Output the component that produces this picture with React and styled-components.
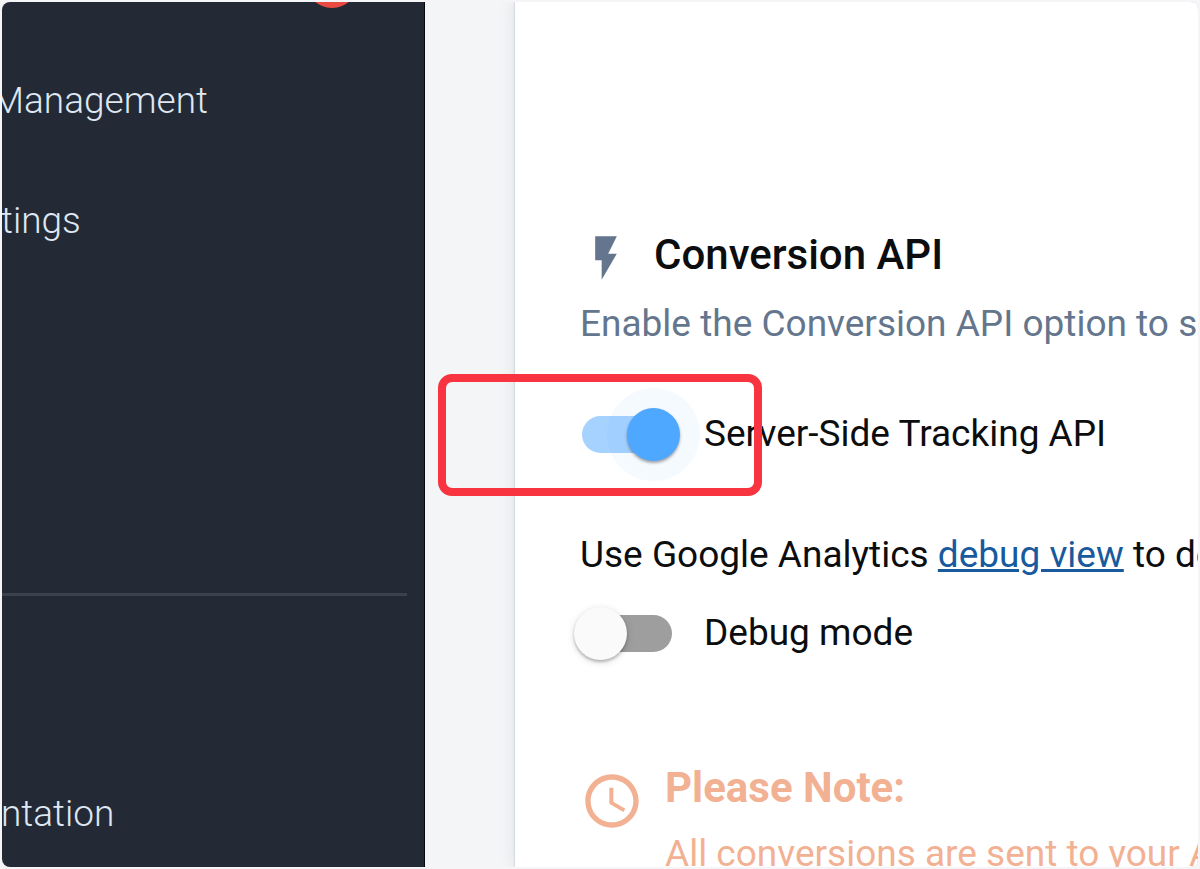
import React from "react";
import styled, { createGlobalStyle } from "styled-components";

const GlobalStyle = createGlobalStyle`
	* {
		box-sizing: border-box;
	}
	body {
		margin: 0;
		background-color: #f5f5f8;
		font-family: Roboto, "Liberation Sans", sans-serif;
		font-size: 37px;
		line-height: 56px;
		color: #0c0d0e;
	}
	h2, h3, p, ul {
		margin: 0;
		padding: 0;
	}
`;
const Page = styled.div`
	height: 100vh;
	padding: 2px;
`;
const Frame = styled.div`
	display: flex;
	height: 100%;
	border-radius: 8px;
	overflow: hidden;
	background-color: #f3f5f7;
`;
const Sidebar = styled.aside`
	position: relative;
	display: flex;
	flex-direction: column;
	flex: 0 0 423px;
	padding-top: 39px;
	overflow: hidden;
	background-color: #242a35;
	border-right: 1px solid #06080c;
`;
const Badge = styled.span`
	position: absolute;
	top: -46px;
	right: 66px;
	width: 52px;
	height: 52px;
	border-radius: 50%;
	background-color: #ea4a41;
`;
const NavList = styled.ul`
	list-style: none;
`;
const NavLink = styled.a`
	display: block;
	margin-left: ${({ $cut }) => ($cut ? "-10px" : "-1px")};
	line-height: 120px;
	font-weight: 300;
	color: #dfe7f2;
	text-decoration: none;
`;
const Divider = styled.hr`
	width: 405px;
	height: 3px;
	margin: 312px 0 158px;
	border: 0;
	flex-shrink: 0;
	background-color: #3b424d;
`;
const Main = styled.main`
	flex: 1;
	min-width: 0;
	margin-left: 90px;
	padding: 230px 0 0 65px;
	background-color: #fff;
	box-shadow: 0 0 2px rgba(40, 50, 60, 0.3), 0 0 16px rgba(40, 60, 70, 0.1);
	white-space: nowrap;
`;
const TitleRow = styled.div`
	display: flex;
	gap: 22px;
	height: 52px;
	margin-bottom: 12px;
`;
const Title = styled.h2`
	font-size: 42px;
	line-height: 46px;
	font-weight: 500;
`;
const Description = styled.p`
	color: #64768d;
`;
const Option = styled.div`
	position: relative;
	display: flex;
	align-items: center;
	gap: 32px;
	height: 100px;
	margin-top: ${({ $spaced }) => ($spaced ? "32px" : "0")};
	padding-left: 2px;
`;
const Switch = styled.input`
	appearance: none;
	position: relative;
	width: 90px;
	height: 37px;
	margin: 0;
	border-radius: 19px;
	background-color: #9e9e9e;
	cursor: pointer;

	&::before {
		content: "";
		position: absolute;
		top: -8px;
		left: -8px;
		width: 53px;
		height: 53px;
		border-radius: 50%;
		background-color: #fafafa;
		box-shadow: 0 2px 3px rgba(0, 0, 0, 0.25), 0 2px 8px rgba(0, 0, 0, 0.12);
	}
	&:checked {
		background-color: #a6d2ff;
	}
	&:checked::before {
		left: 45px;
		background-color: #4fa8ff;
		box-shadow: 0 2px 3px rgba(0, 0, 0, 0.35),
			0 0 0 20px rgba(79, 168, 255, 0.06);
	}
`;
const Highlight = styled.span`
	position: absolute;
	top: -10px;
	left: -142px;
	width: 324px;
	height: 122px;
	border: 8px solid #f73440;
	border-radius: 14px;
	pointer-events: none;
`;
const Hint = styled.p`
	margin-top: 43px;
`;
const DebugLink = styled.a`
	color: #185a9d;
	text-decoration: underline;
`;
const Note = styled.section`
	display: flex;
	gap: 21px;
	margin-top: 86px;
	color: #f2b193;
`;
const NoteTitle = styled.h3`
	margin-bottom: 19px;
	font-size: 42px;
	line-height: 38px;
	font-weight: 700;
`;
const Icon = styled.svg`
	flex-shrink: 0;
	width: ${({ $size }) => $size}px;
	height: ${({ $size }) => $size}px;
	fill: ${({ $color }) => $color || "currentColor"};
`;

const App = () => {
	return (
		<Page>
			<GlobalStyle />
			<Frame>
				<Sidebar>
					<Badge />
					<NavList>
						<li>
							<NavLink href="#management" $cut>Management</NavLink>
						</li>
						<li>
							<NavLink href="#settings">tings</NavLink>
						</li>
					</NavList>
					<Divider />
					<NavLink href="#documentation">ntation</NavLink>
				</Sidebar>
				<Main>
					<TitleRow>
						<Icon $size={52} $color="#64768d" viewBox="0 0 24 24">
							<path d="M7 2v11h3v9l7-12h-4l4-8z" />
						</Icon>
						<Title>Conversion API</Title>
					</TitleRow>
					<Description>
						Enable the Conversion API option to send
					</Description>
					<Option $spaced>
						<Switch type="checkbox" id="tracking" defaultChecked />
						<label htmlFor="tracking">Server-Side Tracking API</label>
						<Highlight />
					</Option>
					<Hint>
						Use Google Analytics{" "}
						<DebugLink href="#debug">debug view</DebugLink> to debug
					</Hint>
					<Option>
						<Switch type="checkbox" id="debug" />
						<label htmlFor="debug">Debug mode</label>
					</Option>
					<Note>
						<Icon $size={64} viewBox="0 0 24 24">
							<path d="M11.99 2C6.47 2 2 6.48 2 12s4.47 10 9.99 10C17.52 22 22 17.52 22 12S17.52 2 11.99 2zM12 20c-4.42 0-8-3.58-8-8s3.58-8 8-8 8 3.58 8 8-3.58 8-8 8z" />
							<path d="M12.5 7H11v6l5.25 3.15.75-1.23-4.5-2.67z" />
						</Icon>
						<div>
							<NoteTitle>Please Note:</NoteTitle>
							<p>All conversions are sent to your API</p>
						</div>
					</Note>
				</Main>
			</Frame>
		</Page>
	);
};

export default App;
